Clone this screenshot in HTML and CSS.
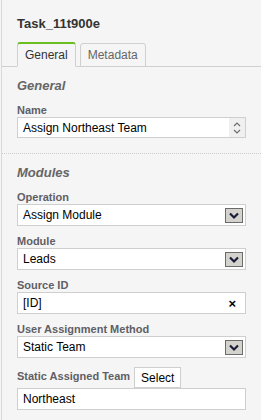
FILE: index.html
```html
<!DOCTYPE html>
<html lang="en">
<head>
    <meta charset="UTF-8">
    <meta name="viewport" content="width=device-width, initial-scale=1.0">
    <title>Task_11t900e</title>
    <link rel="stylesheet" href="styles.css">
</head>
<body>
    <div class="panel">
        <div class="panel-header">
            <h2 class="task-title">Task_11t900e</h2>
            <div class="tabs">
                <div class="tab active">General</div>
                <div class="tab">Metadata</div>
            </div>
        </div>

        <div class="section">
            <h3 class="section-title">General</h3>
            <div class="field">
                <label>Name</label>
                <div class="input name">
                    <span class="value">Assign Northeast Team</span>
                    <span class="spinner">
                        <svg width="8" height="14" viewBox="0 0 8 14"><path d="M1 5 L4 2 L7 5 M1 9 L4 12 L7 9" fill="none" stroke="#6e6e6e" stroke-width="1.2"/></svg>
                    </span>
                </div>
            </div>
        </div>

        <div class="section">
            <h3 class="section-title">Modules</h3>
            <div class="field">
                <label>Operation</label>
                <div class="input select">
                    <span class="value">Assign Module</span>
                    <span class="drop"><svg width="16" height="13" viewBox="0 0 16 13"><path d="M4 4.5 L8 8.5 L12 4.5" fill="none" stroke="#1b1b3a" stroke-width="2.2"/></svg></span>
                </div>
            </div>
            <div class="field">
                <label>Module</label>
                <div class="input select">
                    <span class="value">Leads</span>
                    <span class="drop"><svg width="16" height="13" viewBox="0 0 16 13"><path d="M4 4.5 L8 8.5 L12 4.5" fill="none" stroke="#1b1b3a" stroke-width="2.2"/></svg></span>
                </div>
            </div>
            <div class="field">
                <label>Source ID</label>
                <div class="input">
                    <span class="value">[ID]</span>
                    <span class="clear">&times;</span>
                </div>
            </div>
            <div class="field">
                <label>User Assignment Method</label>
                <div class="input select">
                    <span class="value">Static Team</span>
                    <span class="drop"><svg width="16" height="13" viewBox="0 0 16 13"><path d="M4 4.5 L8 8.5 L12 4.5" fill="none" stroke="#1b1b3a" stroke-width="2.2"/></svg></span>
                </div>
            </div>
            <div class="field">
                <div class="label-row">
                    <label>Static Assigned Team</label>
                    <button class="select-btn">Select</button>
                </div>
                <div class="input">
                    <span class="value">Northeast</span>
                </div>
            </div>
        </div>
    </div>
</body>
</html>
```

FILE: styles.css
```css
body {
    font-family: "Liberation Sans", Arial, sans-serif;
    margin: 0;
    background: #f5f5f5;
    color: #000;
}
.panel {
    margin-left: 1px;
    border-left: 1px solid #d8d8d8;
    min-height: 420px;
}
.panel-header {
    padding-top: 16px;
}
.task-title {
    margin: 0 0 0 15px;
    font-size: 13px;
    line-height: 16px;
    font-weight: bold;
    color: #333;
}
.tabs {
    display: flex;
    align-items: flex-end;
    gap: 4px;
    margin-top: 10px;
    padding-left: 15px;
    border-bottom: 1px solid #cfcfcf;
}
.tab {
    height: 22px;
    line-height: 22px;
    padding: 0 7px;
    font-size: 12px;
    color: #666;
    border: 1px solid #cfcfcf;
    border-radius: 3px 3px 0 0;
    margin-bottom: -1px;
    background: #f5f5f5;
}
.tab.active {
    color: #333;
    border-top: 2px solid #6abf1f;
    border-bottom-color: #f5f5f5;
}

/* sections */
.section {
    padding: 11px 15px 15px 15px;
}
.section + .section {
    border-top: 1px dotted #cfcfcf;
}
.section-title {
    margin: 0 0 10px;
    font-size: 13px;
    line-height: 16px;
    font-weight: bold;
    font-style: italic;
    color: #666;
}
.field {
    margin-bottom: 9px;
}
.field:last-child {
    margin-bottom: 0;
}
.field label {
    display: block;
    font-size: 11px;
    line-height: 13px;
    font-weight: bold;
    color: #5f5f66;
}
.label-row {
    display: flex;
    align-items: flex-end;
    gap: 4px;
    margin-top: 1px;
}
.label-row label {
    padding-bottom: 5px;
}
.select-btn {
    font-family: inherit;
    font-size: 12px;
    height: 21px;
    padding: 0 6px;
    background: #fff;
    border: 1px solid #cfcfcf;
    color: #000;
}
.input {
    display: flex;
    align-items: center;
    height: 20px;
    background: #fff;
    border: 1px solid #cfcfcf;
    font-size: 12px;
    padding-left: 5px;
}
.input.name {
    height: 19px;
}
.input .value {
    flex: 1;
}
.spinner {
    align-self: stretch;
    width: 16px;
    display: flex;
    align-items: center;
    justify-content: center;
    background: #f0f0f0;
}
.drop {
    width: 16px;
    height: 13px;
    margin-right: 2px;
    border: 1px solid #6a6a6a;
    background: #d4d2cc;
    display: flex;
}
.clear {
    font-weight: bold;
    font-size: 13px;
    margin-right: 9px;
}
```
